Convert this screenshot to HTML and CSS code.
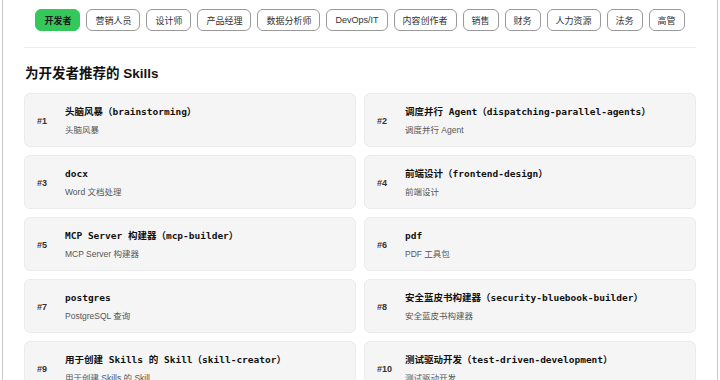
FILE: index.html
```html
<!DOCTYPE html>
<html lang="zh-CN">

<head>
    <meta charset="UTF-8">
    <meta name="viewport" content="width=device-width, initial-scale=1.0">
    <title>Skills 推荐</title>
    <link rel="stylesheet" href="styles.css">
</head>

<body>
    <div class="frame">
        <div class="role-tabs">
            <button class="role-tab active">开发者</button>
            <button class="role-tab">营销人员</button>
            <button class="role-tab">设计师</button>
            <button class="role-tab">产品经理</button>
            <button class="role-tab">数据分析师</button>
            <button class="role-tab">DevOps/IT</button>
            <button class="role-tab">内容创作者</button>
            <button class="role-tab">销售</button>
            <button class="role-tab">财务</button>
            <button class="role-tab">人力资源</button>
            <button class="role-tab">法务</button>
            <button class="role-tab">高管</button>
        </div>

        <h2 class="section-title">为开发者推荐的 Skills</h2>

        <div class="skill-grid">
            <div class="skill-card">
                <span class="skill-rank">#1</span>
                <div class="skill-info">
                    <div class="skill-name">头脑风暴（brainstorming）</div>
                    <div class="skill-desc">头脑风暴</div>
                </div>
            </div>
            <div class="skill-card">
                <span class="skill-rank">#2</span>
                <div class="skill-info">
                    <div class="skill-name">调度并行 Agent（dispatching-parallel-agents）</div>
                    <div class="skill-desc">调度并行 Agent</div>
                </div>
            </div>
            <div class="skill-card">
                <span class="skill-rank">#3</span>
                <div class="skill-info">
                    <div class="skill-name">docx</div>
                    <div class="skill-desc">Word 文档处理</div>
                </div>
            </div>
            <div class="skill-card">
                <span class="skill-rank">#4</span>
                <div class="skill-info">
                    <div class="skill-name">前端设计（frontend-design）</div>
                    <div class="skill-desc">前端设计</div>
                </div>
            </div>
            <div class="skill-card">
                <span class="skill-rank">#5</span>
                <div class="skill-info">
                    <div class="skill-name">MCP Server 构建器（mcp-builder）</div>
                    <div class="skill-desc">MCP Server 构建器</div>
                </div>
            </div>
            <div class="skill-card">
                <span class="skill-rank">#6</span>
                <div class="skill-info">
                    <div class="skill-name">pdf</div>
                    <div class="skill-desc">PDF 工具包</div>
                </div>
            </div>
            <div class="skill-card">
                <span class="skill-rank">#7</span>
                <div class="skill-info">
                    <div class="skill-name">postgres</div>
                    <div class="skill-desc">PostgreSQL 查询</div>
                </div>
            </div>
            <div class="skill-card">
                <span class="skill-rank">#8</span>
                <div class="skill-info">
                    <div class="skill-name">安全蓝皮书构建器（security-bluebook-builder）</div>
                    <div class="skill-desc">安全蓝皮书构建器</div>
                </div>
            </div>
            <div class="skill-card">
                <span class="skill-rank">#9</span>
                <div class="skill-info">
                    <div class="skill-name">用于创建 Skills 的 Skill（skill-creator）</div>
                    <div class="skill-desc">用于创建 Skills 的 Skill</div>
                </div>
            </div>
            <div class="skill-card">
                <span class="skill-rank">#10</span>
                <div class="skill-info">
                    <div class="skill-name">测试驱动开发（test-driven-development）</div>
                    <div class="skill-desc">测试驱动开发</div>
                </div>
            </div>
        </div>
    </div>
</body>

</html>
```

FILE: styles.css
```css
body {
    margin: 0;
    background-color: #ffffff;
    color: #111111;
    font-family: 'Liberation Sans', 'Noto Sans CJK SC', sans-serif;
}

.frame {
    margin: 0 2px 0 2px;
    padding: 9px 21px 20px 21px;
    border-left: 1px solid #c8c8c8;
    border-right: 1px solid #c8c8c8;
    min-height: 400px;
}

/* role filter */
.role-tabs {
    display: flex;
    flex-wrap: wrap;
    justify-content: center;
    gap: 6px;
    padding-bottom: 16px;
    border-bottom: 1px solid #ececec;
}

.role-tab {
    height: 22px;
    padding: 0 8px;
    border: 1px solid #9a9a9a;
    border-radius: 6px;
    background: #ffffff;
    color: #333333;
    font-family: 'Liberation Sans', 'Noto Sans CJK SC', sans-serif;
    font-size: 9px;
    cursor: pointer;
}

.role-tab.active {
    background-color: #34c759;
    border-color: #34c759;
    color: #1a1a1a;
    font-weight: 600;
}

.section-title {
    margin: 17px 0 0 1px;
    height: 28px;
    font-size: 13.5px;
    line-height: 17px;
    font-weight: 700;
}

/* skill cards */
.skill-grid {
    display: grid;
    grid-template-columns: 1fr 1fr;
    gap: 8px;
}

.skill-card {
    display: flex;
    align-items: center;
    height: 54px;
    box-sizing: border-box;
    padding: 0 12px;
    background-color: #f5f5f5;
    border: 1px solid #ebebeb;
    border-radius: 6px;
}

.skill-rank {
    flex: 0 0 28px;
    font-size: 9px;
    font-weight: 700;
    color: #333333;
    padding-top: 2px;
}

.skill-name {
    font-family: 'DejaVu Sans Mono', 'Noto Sans CJK SC', monospace;
    font-size: 9.5px;
    font-weight: 700;
    line-height: 14px;
    margin-bottom: 5px;
    white-space: nowrap;
}

.skill-desc {
    font-size: 8.5px;
    line-height: 12px;
    color: #555555;
}
```
